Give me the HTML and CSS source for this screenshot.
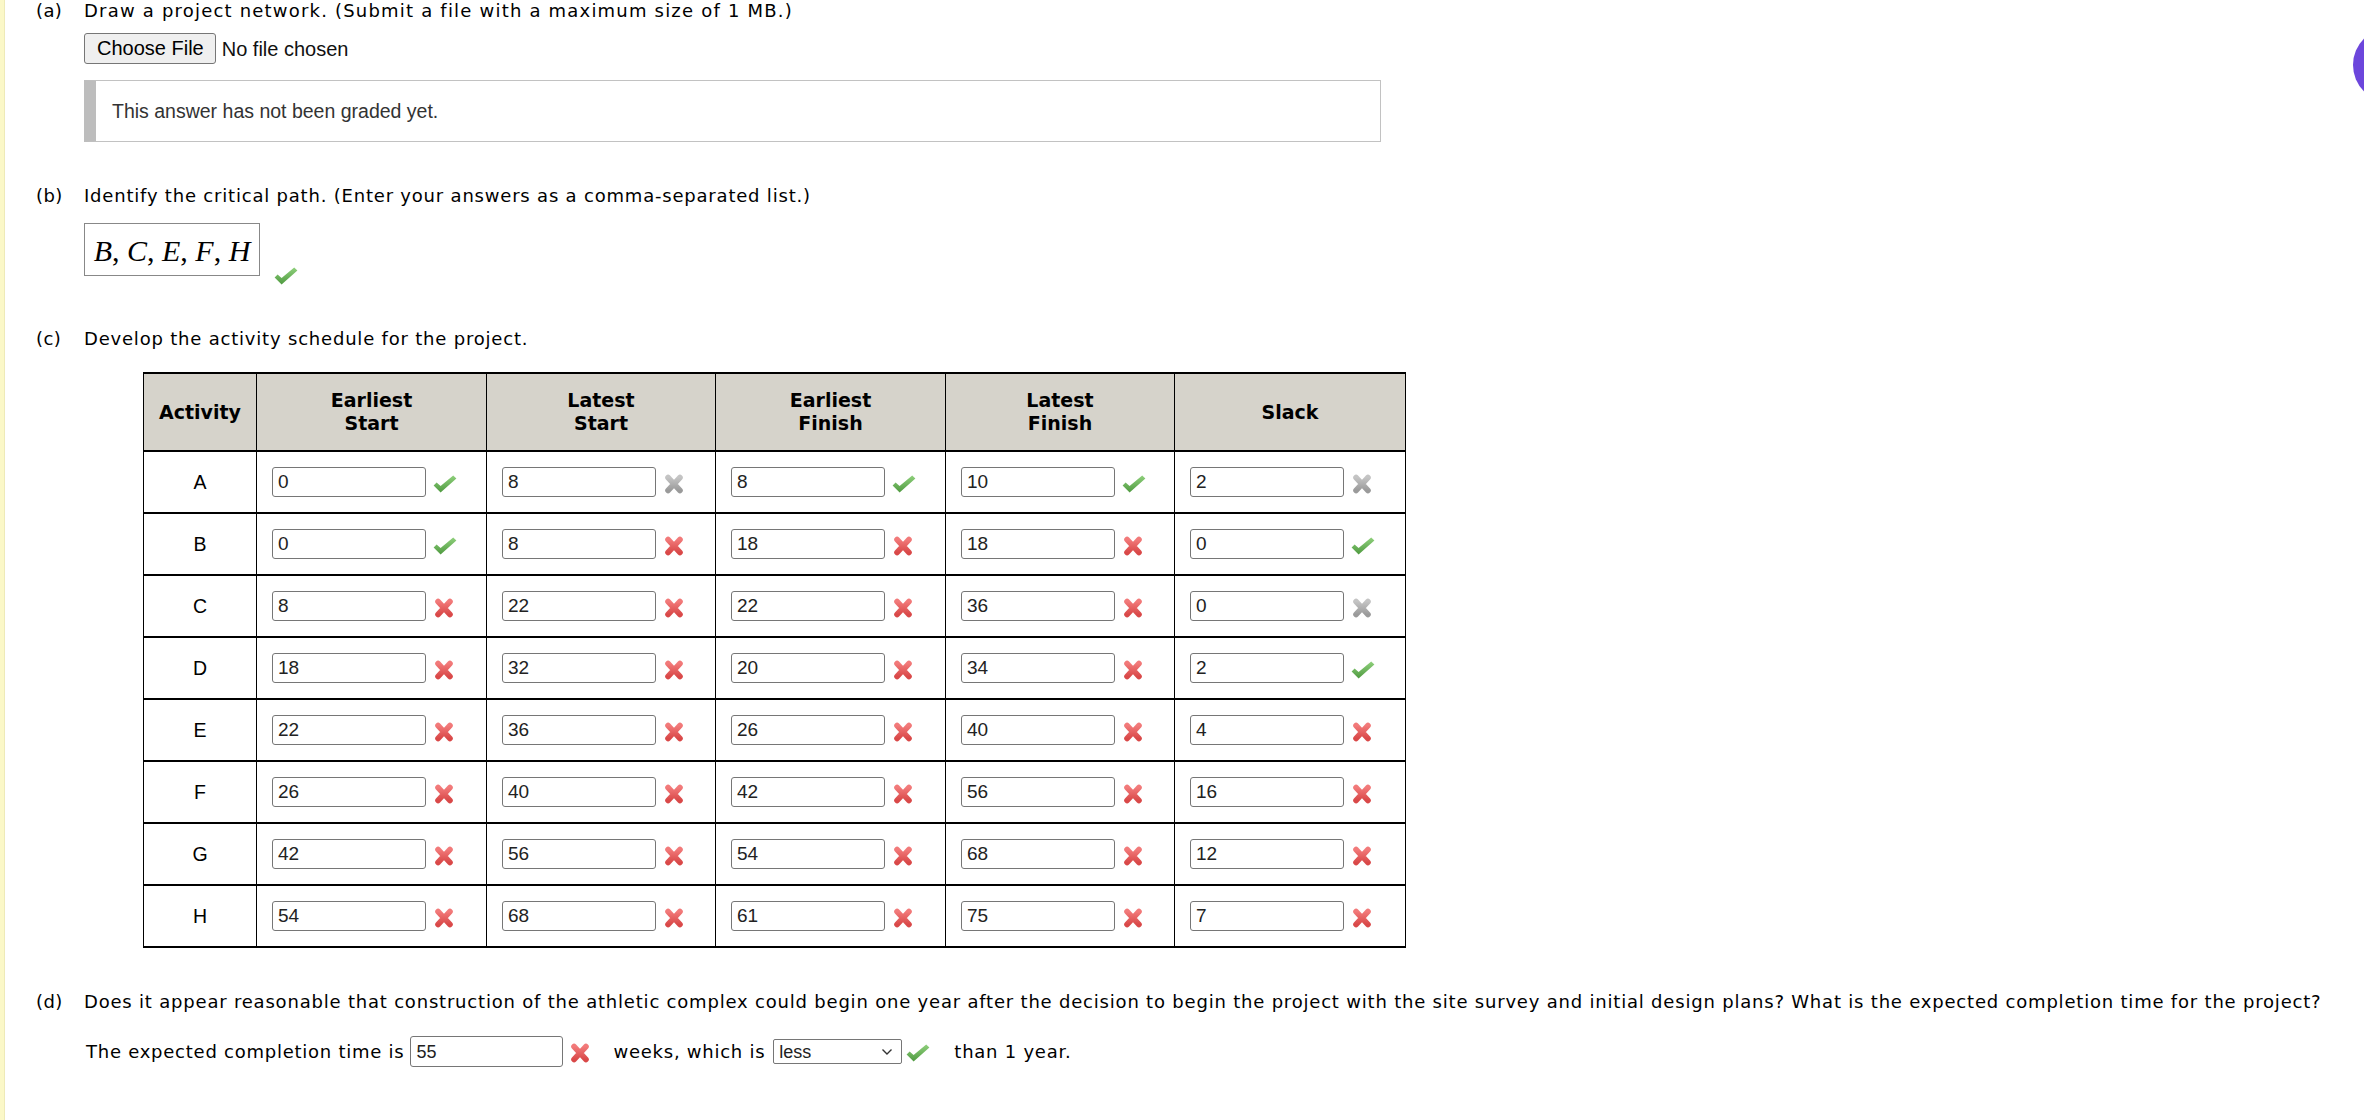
FILE: index.html
```html
<!DOCTYPE html>
<html lang="en">
<head>
<meta charset="utf-8">
<title>Project schedule</title>
<link rel="stylesheet" href="styles.css">
</head>
<body>
<svg class="defs" aria-hidden="true">
  <defs>
    <linearGradient id="gGreen" x1="0" y1="0" x2="0" y2="1">
      <stop offset="0" stop-color="#8fd07c"/>
      <stop offset="1" stop-color="#4f9a40"/>
    </linearGradient>
    <linearGradient id="gRed" x1="0" y1="0" x2="0" y2="1">
      <stop offset="0" stop-color="#f27a7a"/>
      <stop offset="1" stop-color="#d94848"/>
    </linearGradient>
    <linearGradient id="gGrey" x1="0" y1="0" x2="0" y2="1">
      <stop offset="0" stop-color="#c4c4c4"/>
      <stop offset="1" stop-color="#9a9a9a"/>
    </linearGradient>
    <symbol id="ok" viewBox="0 0 24 18">
      <path d="M0.6 10.4 L3.6 7.4 L7.6 11 L20.2 0.6 L23.4 3.6 L7.6 17.4 Z" fill="url(#gGreen)"/>
    </symbol>
    <symbol id="bad" viewBox="0 0 22 20">
      <path d="M5 3.5 L17 16.5 M17 3.5 L5 16.5" stroke="url(#gRed)" stroke-width="5.6" stroke-linecap="round" fill="none"/>
    </symbol>
    <symbol id="off" viewBox="0 0 22 20">
      <path d="M5 3.5 L17 16.5 M17 3.5 L5 16.5" stroke="url(#gGrey)" stroke-width="5.6" stroke-linecap="round" fill="none"/>
    </symbol>
  </defs>
</svg>

<div class="page">
  <section class="part">
    <div class="qline qline-a"><span class="lbl">(a)</span><span>Draw a project network. (Submit a file with a maximum size of 1 MB.)</span></div>
    <div class="body">
      <div class="file-row">
        <button class="file-btn" type="button">Choose File</button>
        <span class="file-none">No file chosen</span>
      </div>
      <div class="notice">This answer has not been graded yet.</div>
    </div>
  </section>

  <section class="part part-b">
    <div class="qline"><span class="lbl">(b)</span><span>Identify the critical path. (Enter your answers as a comma-separated list.)</span></div>
    <div class="body">
      <div class="math-row">
        <div class="math"><span class="math-txt"><i>B</i>, <i>C</i>, <i>E</i>, <i>F</i>, <i>H</i></span></div>
        <svg class="ico ico-ok math-ok"><use href="#ok"/></svg>
      </div>
    </div>
  </section>

  <section class="part part-c">
    <div class="qline"><span class="lbl">(c)</span><span>Develop the activity schedule for the project.</span></div>
    <div class="body">
      <table class="tbl">
        <colgroup>
          <col class="c-act"><col class="c-1"><col class="c-2"><col class="c-3"><col class="c-4"><col class="c-5">
        </colgroup>
        <thead>
          <tr><th>Activity</th><th>Earliest<br>Start</th><th>Latest<br>Start</th><th>Earliest<br>Finish</th><th>Latest<br>Finish</th><th>Slack</th></tr>
        </thead>
        <tbody>
          <tr><td class="act">A</td>
            <td><div class="fld"><span class="inp">0</span><svg class="ico ico-ok"><use href="#ok"/></svg></div></td>
            <td><div class="fld"><span class="inp">8</span><svg class="ico ico-x"><use href="#off"/></svg></div></td>
            <td><div class="fld"><span class="inp">8</span><svg class="ico ico-ok"><use href="#ok"/></svg></div></td>
            <td><div class="fld"><span class="inp">10</span><svg class="ico ico-ok"><use href="#ok"/></svg></div></td>
            <td><div class="fld"><span class="inp">2</span><svg class="ico ico-x"><use href="#off"/></svg></div></td></tr>
          <tr><td class="act">B</td>
            <td><div class="fld"><span class="inp">0</span><svg class="ico ico-ok"><use href="#ok"/></svg></div></td>
            <td><div class="fld"><span class="inp">8</span><svg class="ico ico-x"><use href="#bad"/></svg></div></td>
            <td><div class="fld"><span class="inp">18</span><svg class="ico ico-x"><use href="#bad"/></svg></div></td>
            <td><div class="fld"><span class="inp">18</span><svg class="ico ico-x"><use href="#bad"/></svg></div></td>
            <td><div class="fld"><span class="inp">0</span><svg class="ico ico-ok"><use href="#ok"/></svg></div></td></tr>
          <tr><td class="act">C</td>
            <td><div class="fld"><span class="inp">8</span><svg class="ico ico-x"><use href="#bad"/></svg></div></td>
            <td><div class="fld"><span class="inp">22</span><svg class="ico ico-x"><use href="#bad"/></svg></div></td>
            <td><div class="fld"><span class="inp">22</span><svg class="ico ico-x"><use href="#bad"/></svg></div></td>
            <td><div class="fld"><span class="inp">36</span><svg class="ico ico-x"><use href="#bad"/></svg></div></td>
            <td><div class="fld"><span class="inp">0</span><svg class="ico ico-x"><use href="#off"/></svg></div></td></tr>
          <tr><td class="act">D</td>
            <td><div class="fld"><span class="inp">18</span><svg class="ico ico-x"><use href="#bad"/></svg></div></td>
            <td><div class="fld"><span class="inp">32</span><svg class="ico ico-x"><use href="#bad"/></svg></div></td>
            <td><div class="fld"><span class="inp">20</span><svg class="ico ico-x"><use href="#bad"/></svg></div></td>
            <td><div class="fld"><span class="inp">34</span><svg class="ico ico-x"><use href="#bad"/></svg></div></td>
            <td><div class="fld"><span class="inp">2</span><svg class="ico ico-ok"><use href="#ok"/></svg></div></td></tr>
          <tr><td class="act">E</td>
            <td><div class="fld"><span class="inp">22</span><svg class="ico ico-x"><use href="#bad"/></svg></div></td>
            <td><div class="fld"><span class="inp">36</span><svg class="ico ico-x"><use href="#bad"/></svg></div></td>
            <td><div class="fld"><span class="inp">26</span><svg class="ico ico-x"><use href="#bad"/></svg></div></td>
            <td><div class="fld"><span class="inp">40</span><svg class="ico ico-x"><use href="#bad"/></svg></div></td>
            <td><div class="fld"><span class="inp">4</span><svg class="ico ico-x"><use href="#bad"/></svg></div></td></tr>
          <tr><td class="act">F</td>
            <td><div class="fld"><span class="inp">26</span><svg class="ico ico-x"><use href="#bad"/></svg></div></td>
            <td><div class="fld"><span class="inp">40</span><svg class="ico ico-x"><use href="#bad"/></svg></div></td>
            <td><div class="fld"><span class="inp">42</span><svg class="ico ico-x"><use href="#bad"/></svg></div></td>
            <td><div class="fld"><span class="inp">56</span><svg class="ico ico-x"><use href="#bad"/></svg></div></td>
            <td><div class="fld"><span class="inp">16</span><svg class="ico ico-x"><use href="#bad"/></svg></div></td></tr>
          <tr><td class="act">G</td>
            <td><div class="fld"><span class="inp">42</span><svg class="ico ico-x"><use href="#bad"/></svg></div></td>
            <td><div class="fld"><span class="inp">56</span><svg class="ico ico-x"><use href="#bad"/></svg></div></td>
            <td><div class="fld"><span class="inp">54</span><svg class="ico ico-x"><use href="#bad"/></svg></div></td>
            <td><div class="fld"><span class="inp">68</span><svg class="ico ico-x"><use href="#bad"/></svg></div></td>
            <td><div class="fld"><span class="inp">12</span><svg class="ico ico-x"><use href="#bad"/></svg></div></td></tr>
          <tr><td class="act">H</td>
            <td><div class="fld"><span class="inp">54</span><svg class="ico ico-x"><use href="#bad"/></svg></div></td>
            <td><div class="fld"><span class="inp">68</span><svg class="ico ico-x"><use href="#bad"/></svg></div></td>
            <td><div class="fld"><span class="inp">61</span><svg class="ico ico-x"><use href="#bad"/></svg></div></td>
            <td><div class="fld"><span class="inp">75</span><svg class="ico ico-x"><use href="#bad"/></svg></div></td>
            <td><div class="fld"><span class="inp">7</span><svg class="ico ico-x"><use href="#bad"/></svg></div></td></tr>
        </tbody>
      </table>
    </div>
  </section>

  <section class="part part-d">
    <div class="qline"><span class="lbl">(d)</span><span>Does it appear reasonable that construction of the athletic complex could begin one year after the decision to begin the project with the site survey and initial design plans? What is the expected completion time for the project?</span></div>
    <div class="body">
      <div class="answer-row">
        <span>The expected completion time is</span>
        <span class="inp inp-wide">55</span>
        <svg class="ico ico-x ans-x"><use href="#bad"/></svg>
        <span class="ans-txt">weeks, which is</span>
        <span class="sel"><span>less</span><svg class="chev" viewBox="0 0 12 8"><path d="M1.5 1.5 L6 6 L10.5 1.5" fill="none" stroke="#333" stroke-width="1.4"/></svg></span>
        <svg class="ico ico-ok ans-ok"><use href="#ok"/></svg>
        <span class="ans-end">than 1 year.</span>
      </div>
    </div>
  </section>
</div>
<div class="help-bubble"></div>
</body>
</html>
```

FILE: styles.css
```css
html, body {
  margin: 0;
  padding: 0;
  background: #fff;
}
body {
  font-family: "DejaVu Sans", Verdana, sans-serif;
  font-size: 18px;
  line-height: 22px;
  color: #000;
  overflow: hidden;
}
.defs {
  width: 0;
  height: 0;
  overflow: hidden;
  display: block;
}
.page {
  min-height: 1120px;
  border-left: 4px solid #fbf8c8;
  box-shadow: inset 1px 0 0 #eeeab8;
  padding-left: 32px;
  box-sizing: border-box;
}
.qline {
  display: flex;
  letter-spacing: 0.8px;
}
.qline-a {
  letter-spacing: 1.2px;
}
.lbl {
  width: 48px;
  flex: none;
  letter-spacing: 0.4px;
}
.body {
  margin-left: 48px;
}

/* part a */
.file-row {
  display: flex;
  align-items: center;
  margin-top: 11px;
  font-family: "Liberation Sans", Arial, sans-serif;
  font-size: 20px;
}
.file-btn {
  height: 31px;
  padding: 0 11px 0 12px;
  border: 1px solid #767676;
  border-radius: 3px;
  background: #efefef;
  font-family: "Liberation Sans", Arial, sans-serif;
  font-size: 20px;
  color: #000;
}
.file-none {
  margin-left: 6px;
  color: #111;
}
.notice {
  margin-top: 16px;
  width: 1297px;
  height: 62px;
  box-sizing: border-box;
  border: 1px solid #c2c2c2;
  border-left: 12px solid #bdbdbd;
  padding-left: 16px;
  display: flex;
  align-items: center;
  font-family: "Liberation Sans", Arial, sans-serif;
  font-size: 19.5px;
  color: #333;
}

/* part b */
.part-b {
  margin-top: 43px;
}
.math-row {
  display: flex;
  align-items: flex-end;
  margin-top: 16px;
}
.math {
  width: 176px;
  height: 53px;
  box-sizing: border-box;
  border: 1px solid #888;
  display: flex;
  align-items: center;
  justify-content: center;
  padding-top: 2px;
}
.math-txt {
  font-family: "Liberation Serif", "Times New Roman", serif;
  font-size: 30px;
  color: #000;
  white-space: nowrap;
}
.math-txt i {
  font-style: italic;
}
.ico {
  display: block;
  flex: none;
}
.ico-ok {
  width: 24px;
  height: 18px;
}
.ico-x {
  width: 22px;
  height: 20px;
}
.math-ok {
  margin-left: 14px;
  margin-bottom: -9px;
}

/* part c */
.part-c {
  margin-top: 52px;
}
.tbl {
  border-collapse: collapse;
  table-layout: fixed;
  width: 1262px;
  margin: 22px 0 0 59px;
}
.c-act { width: 113px; }
.c-1 { width: 230px; }
.c-2 { width: 229px; }
.c-3 { width: 230px; }
.c-4 { width: 229px; }
.c-5 { width: 231px; }
.tbl th, .tbl td {
  border-left: 1px solid #000;
  border-right: 1px solid #000;
  border-top: 2px solid #000;
  border-bottom: 2px solid #000;
  padding: 0;
}
.tbl thead tr {
  height: 78px;
}
.tbl tbody tr {
  height: 62px;
}
.tbl th {
  background: #d6d3cb;
  font-family: "DejaVu Sans", Verdana, sans-serif;
  font-weight: bold;
  font-size: 19px;
  line-height: 23px;
  text-align: center;
  vertical-align: middle;
}
.tbl td.act {
  text-align: center;
  font-family: "Liberation Sans", Arial, sans-serif;
  font-size: 19.5px;
}
.fld {
  display: flex;
  align-items: center;
  gap: 7px;
  padding-left: 15px;
}
.fld .ico {
  margin-top: 3px;
}
.inp {
  display: flex;
  align-items: center;
  box-sizing: border-box;
  width: 154px;
  height: 30px;
  border: 1px solid #767676;
  border-radius: 3px;
  padding-left: 5px;
  background: #fff;
  font-family: "Liberation Sans", Arial, sans-serif;
  font-size: 19px;
  letter-spacing: 0;
  color: #222;
}

/* part d */
.part-d {
  margin-top: 43px;
}
.answer-row {
  display: flex;
  align-items: center;
  margin-top: 23px;
  margin-left: 2px;
  letter-spacing: 0.75px;
}
.inp-wide {
  width: 153px;
  height: 31px;
  margin-left: 6px;
  font-size: 18px;
}
.ans-x {
  margin-left: 6px;
  margin-top: 3px;
}
.ans-txt {
  margin-left: 22px;
}
.sel {
  display: flex;
  align-items: center;
  justify-content: space-between;
  box-sizing: border-box;
  width: 129px;
  height: 25px;
  margin-left: 8px;
  border: 1px solid #767676;
  border-radius: 2px;
  padding: 0 8px 0 5px;
  font-family: "Liberation Sans", Arial, sans-serif;
  font-size: 18px;
  letter-spacing: 0;
  color: #222;
}
.chev {
  width: 12px;
  height: 8px;
}
.ans-ok {
  margin-left: 4px;
  margin-top: 2px;
}
.ans-end {
  margin-left: 24px;
}

/* floating help bubble, mostly off-screen */
.help-bubble {
  position: absolute;
  left: 2353px;
  top: 28px;
  width: 74px;
  height: 74px;
  border-radius: 50%;
  background: #6c46dc;
}
```
